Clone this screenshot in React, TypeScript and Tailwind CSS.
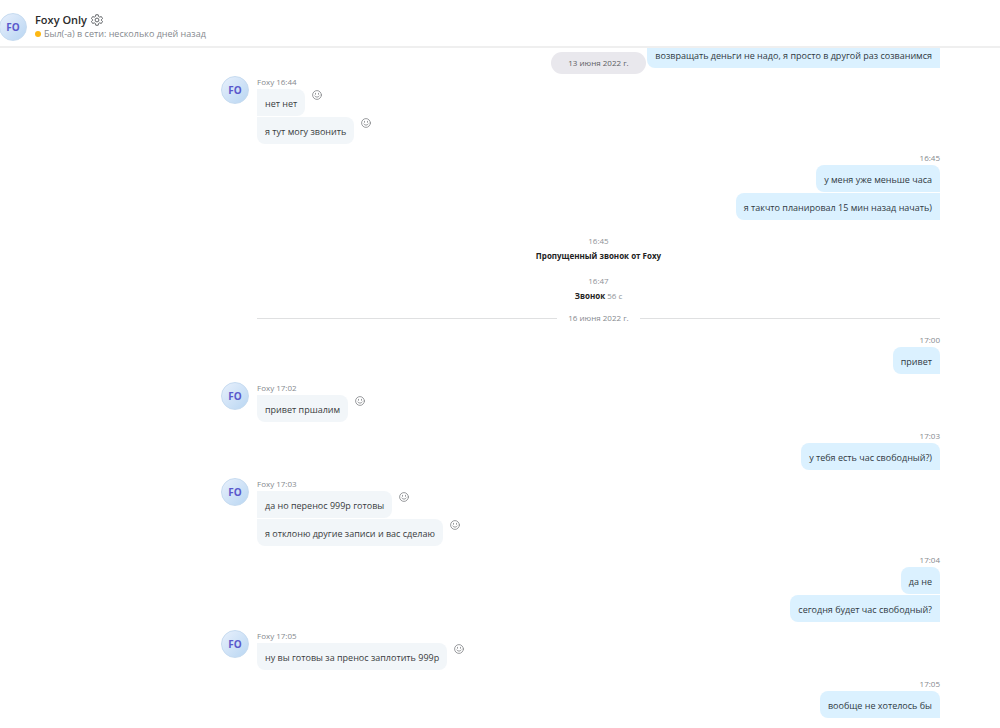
import { clsx } from "clsx";

type Entry =
	| { kind: "in"; time: string; messages: string[] }
	| { kind: "out"; time?: string; messages: string[] }
	| { kind: "call"; time: string; title: string; duration?: string }
	| { kind: "date"; label: string };

const entries: Entry[] = [
	{ kind: "out", messages: ["возвращать деньги не надо, я просто в другой раз созванимся"] },
	{ kind: "in", time: "16:44", messages: ["нет нет", "я тут могу звонить"] },
	{
		kind: "out",
		time: "16:45",
		messages: ["у меня уже меньше часа", "я такчто планировал 15 мин назад начать)"],
	},
	{ kind: "call", time: "16:45", title: "Пропущенный звонок от Foxy" },
	{ kind: "call", time: "16:47", title: "Звонок", duration: "56 с" },
	{ kind: "date", label: "16 июня 2022 г." },
	{ kind: "out", time: "17:00", messages: ["привет"] },
	{ kind: "in", time: "17:02", messages: ["привет пршалим"] },
	{ kind: "out", time: "17:03", messages: ["у тебя есть час свободный?)"] },
	{
		kind: "in",
		time: "17:03",
		messages: ["да но перенос 999р готовы", "я отклоню другие записи и вас сделаю"],
	},
	{ kind: "out", time: "17:04", messages: ["да не", "сегодня будет час свободный?"] },
	{ kind: "in", time: "17:05", messages: ["ну вы готовы за пренос заплотить 999р"] },
	{ kind: "out", time: "17:05", messages: ["вообще не хотелось бы"] },
];

const GearIcon = () => (
	<svg viewBox="0 0 24 24" className="size-3" fill="none" stroke="currentColor" strokeWidth="2" strokeLinejoin="round">
		<path d="M9.6 1.5h4.8l.8 3.6 2 1.1 3.5-1.1 2.4 4.1-2.7 2.5v.6l2.7 2.5-2.4 4.1-3.5-1.1-2 1.1-.8 3.6H9.6l-.8-3.6-2-1.1-3.5 1.1-2.4-4.1 2.7-2.5v-.6L.9 9.2l2.4-4.1 3.5 1.1 2-1.1z" />
		<circle cx="12" cy="12" r="3.8" />
	</svg>
);

const SmileIcon = () => (
	<svg viewBox="0 0 20 20" className="size-[10px]" fill="none" stroke="currentColor" strokeWidth="1.6" strokeLinecap="round">
		<circle cx="10" cy="10" r="8.8" />
		<path d="M7 6.6v2M13 6.6v2M5.6 12c1.8 3.2 7 3.2 8.8 0" />
	</svg>
);

const Avatar = ({ className }: { className?: string }) => (
	<div
		className={clsx(
			"flex size-7 shrink-0 items-center justify-center rounded-full border border-[#c6dbf0] bg-linear-to-br from-[#e8f0fc] to-[#b9d6f2] text-[10px] font-bold text-[#5a58cc]",
			className,
		)}
	>
		FO
	</div>
);

const Incoming = ({ time, messages }: { time: string; messages: string[] }) => (
	<section className="mb-[7px] flex gap-2">
		<Avatar className="mt-px" />
		<div className="min-w-0">
			<p className="text-[8px] leading-[14px] text-[#85898e]">Foxy {time}</p>
			<div className="flex flex-col gap-px">
				{messages.map((message, i) => (
					<div key={message} className="flex items-start gap-[7px]">
						<p
							className={clsx(
								"rounded-r-lg bg-[#f2f6f9] px-2 pt-[7px] pb-1 text-[9px] leading-4 text-[#393c40]",
								i === messages.length - 1 && "rounded-bl-lg",
							)}
						>
							{message}
						</p>
						<button type="button" aria-label="Реакция" className="mt-px text-[#808387]">
							<SmileIcon />
						</button>
					</div>
				))}
			</div>
		</div>
	</section>
);

const Outgoing = ({ time, messages }: { time?: string; messages: string[] }) => (
	<section className="mb-[7px] flex flex-col items-end">
		{time && <p className="text-[8px] leading-[14px] text-[#85898e]">{time}</p>}
		<div className="flex flex-col items-end gap-px">
			{messages.map((message, i) => (
				<p
					key={message}
					className={clsx(
						"rounded-l-lg bg-[#dbf1ff] px-2 pt-[7px] pb-1 text-[9px] leading-4 text-[#303a43]",
						i === 0 && "rounded-tr-lg",
					)}
				>
					{message}
				</p>
			))}
		</div>
	</section>
);

const Call = ({ time, title, duration }: { time: string; title: string; duration?: string }) => (
	<section className="ml-9 pt-[7px] pb-1 text-center text-[8px] text-[#8e9297]">
		<p className="leading-[14px]">{time}</p>
		<p className="leading-[15px]">
			<b className="font-bold text-[#222]">{title}</b> {duration}
		</p>
	</section>
);

const DateDivider = ({ label }: { label: string }) => (
	<div className="mt-1 mb-2 ml-9 flex items-center gap-[11px] text-[8px] leading-[14px] text-[#85898e]">
		<span className="h-px grow bg-[#dfe0e1]" />
		{label}
		<span className="h-px grow bg-[#dfe0e1]" />
	</div>
);

const renderEntry = (entry: Entry, i: number) => {
	switch (entry.kind) {
		case "in":
			return <Incoming key={i} {...entry} />;
		case "out":
			return <Outgoing key={i} {...entry} />;
		case "call":
			return <Call key={i} {...entry} />;
		case "date":
			return <DateDivider key={i} label={entry.label} />;
	}
};

export default function App() {
	return (
		<div className="flex h-screen flex-col overflow-hidden bg-white font-['Open_Sans','Noto_Sans',sans-serif]">
			<header className="flex shrink-0 items-center gap-2 border-b-2 border-[#efefef] pt-[13px] pb-[5px]">
				<Avatar className="-ml-px" />
				<div>
					<div className="flex items-center gap-1">
						<h1 className="text-[11px] leading-[14px] font-semibold text-[#2b2b2b]">Foxy Only</h1>
						<button type="button" aria-label="Настройки" className="text-[#66696d]">
							<GearIcon />
						</button>
					</div>
					<p className="flex items-center gap-[3px] text-[9px] leading-[14px] text-[#85898e]">
						<span className="size-[6px] rounded-full bg-[#fdb813]" />
						Был(-а) в сети: несколько дней назад
					</p>
				</div>
			</header>
			<main className="relative min-h-0 grow overflow-hidden pr-[60px] pl-[221px]">
				<div className="-mt-[7px]">{entries.map(renderEntry)}</div>
				<div className="absolute inset-x-0 top-1 flex justify-center pr-[60px] pl-[257px]">
					<span className="rounded-full bg-[#e9e8ed] px-[17px] py-1 text-[8px] leading-[14px] text-[#5c5e63]">
						13 июня 2022 г.
					</span>
				</div>
			</main>
		</div>
	);
}
